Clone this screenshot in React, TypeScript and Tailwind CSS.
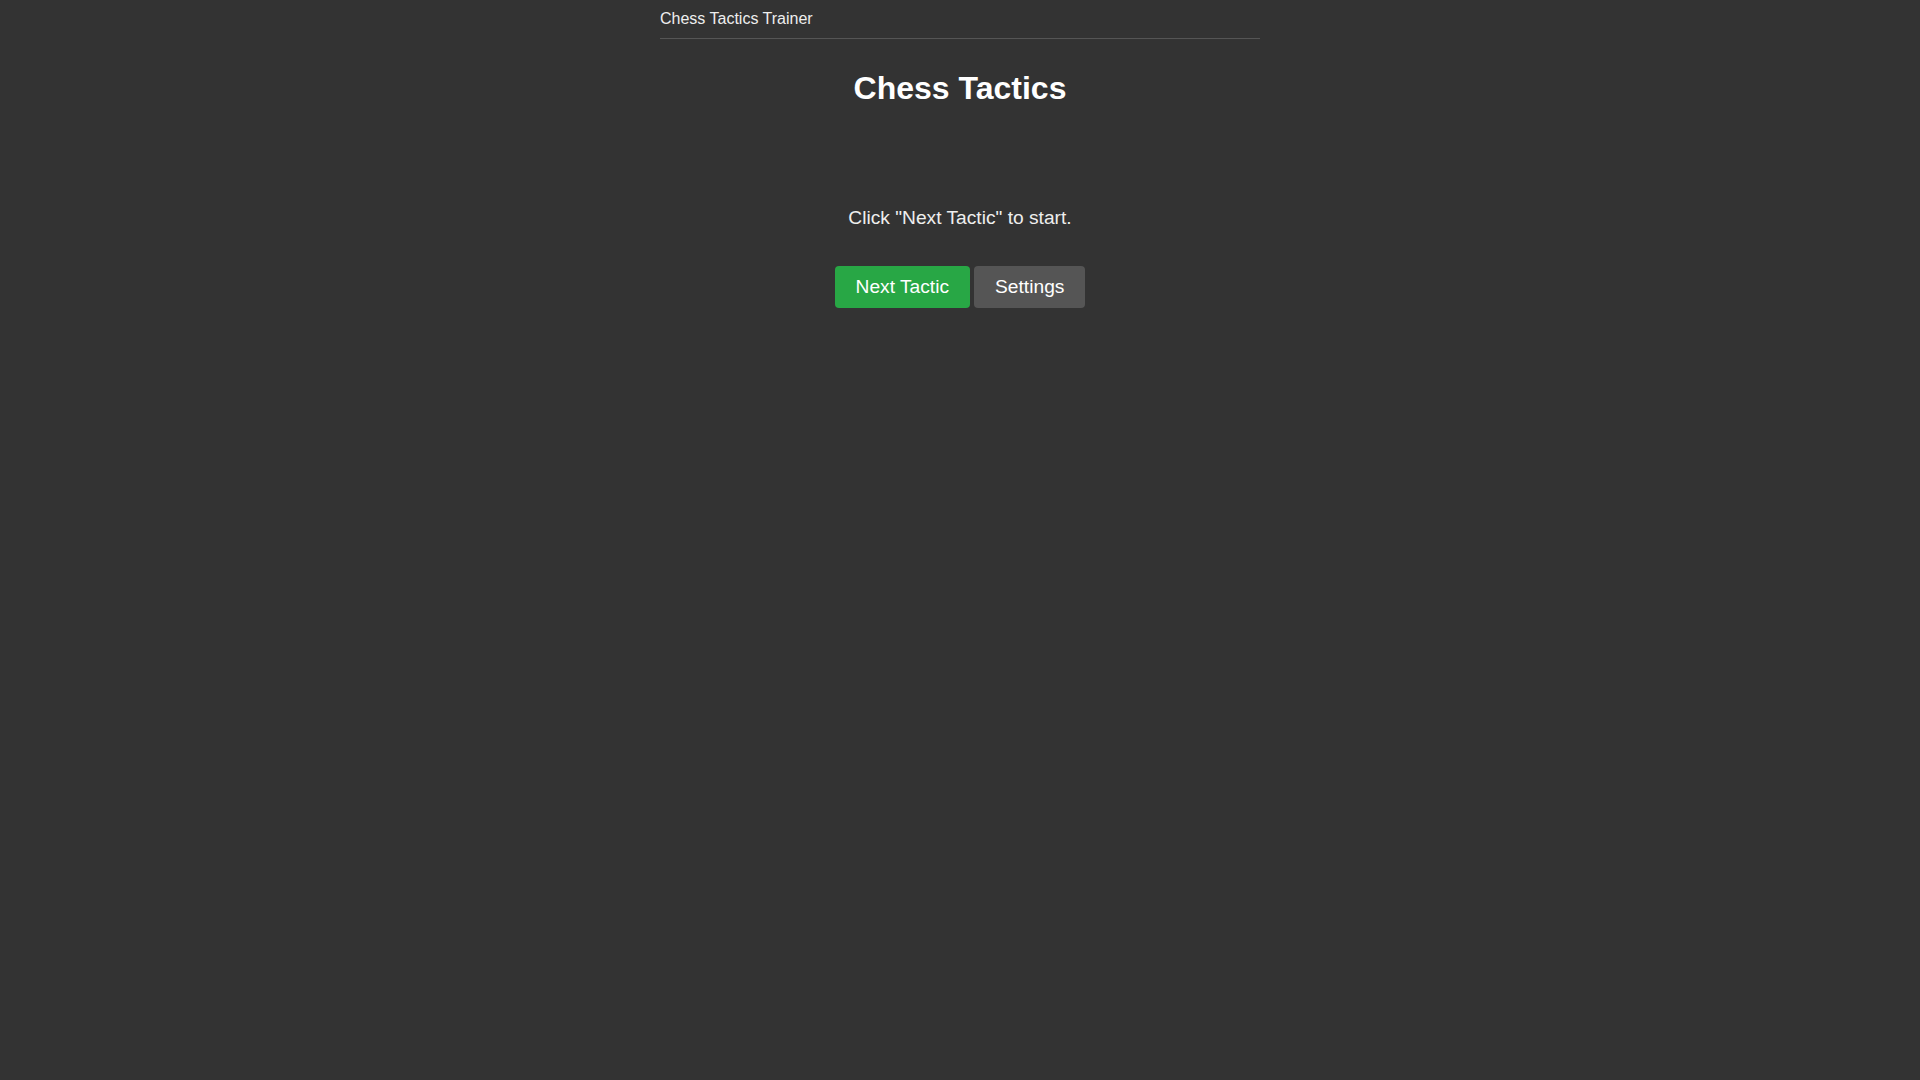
import React from "react";

export default function App() {
  return (
    <div className="min-h-screen w-full bg-[#333333] text-white" style={{ fontFamily: '"Liberation Sans", Arial, sans-serif' }}>
      <div className="mx-auto w-[600px]">
        <header className="border-b border-[#555555] py-[10px] text-[16px] leading-[18px] text-[#eeeeee]">
          Chess Tactics Trainer
        </header>
        <h1 className="mt-[31px] text-center text-[32px] font-bold leading-[37px] text-white">Chess Tactics</h1>
        <p className="mt-[100px] text-center text-[19.2px] leading-[22px] text-[#eeeeee]">
          Click "Next Tactic" to start.
        </p>
        <div className="mt-[37px] flex justify-center gap-[4px]">
          <button className="rounded-[4px] bg-[#28a745] px-[21px] py-[10px] text-[19.2px] leading-[22px] text-white">
            Next Tactic
          </button>
          <button className="rounded-[4px] bg-[#555555] px-[21px] py-[10px] text-[19.2px] leading-[22px] text-white">
            Settings
          </button>
        </div>
      </div>
    </div>
  );
}
